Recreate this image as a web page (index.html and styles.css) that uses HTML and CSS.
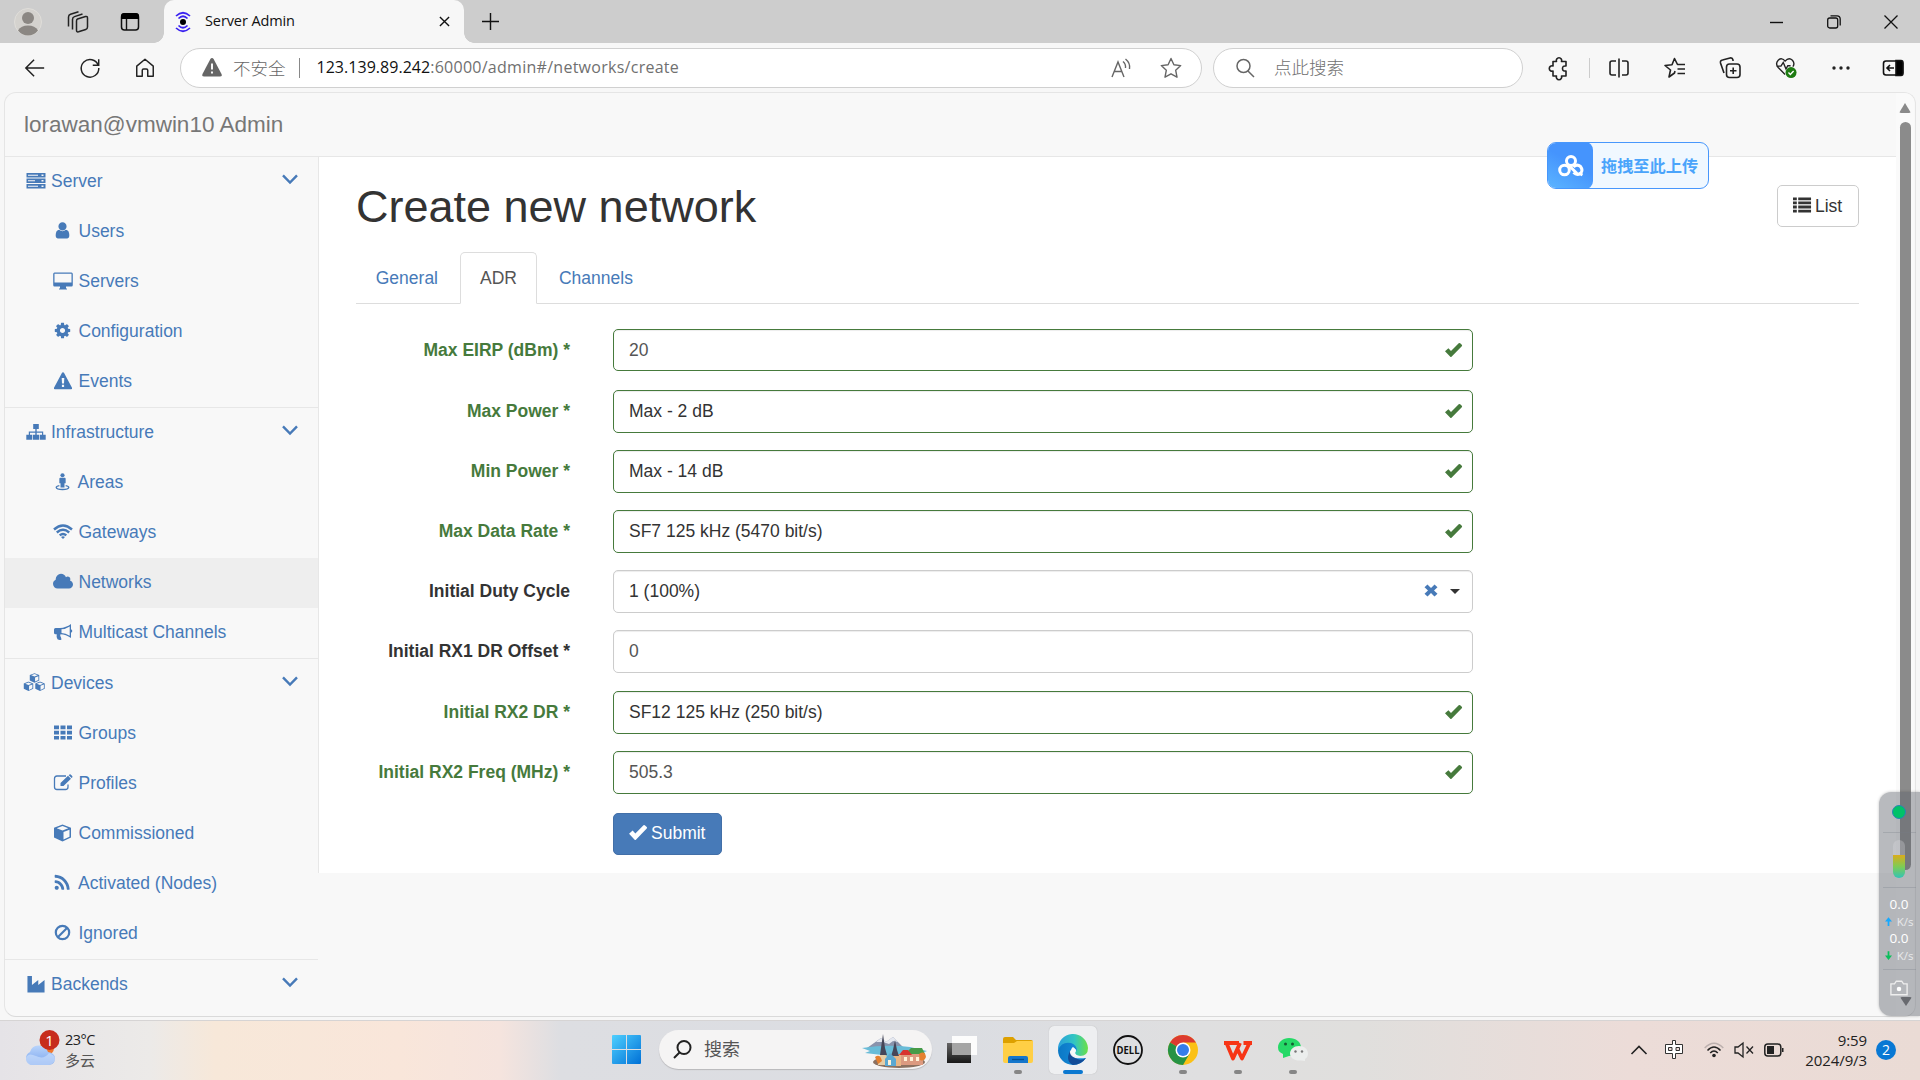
FILE: index.html
```html
<!DOCTYPE html>
<html lang="zh-CN">
<head>
<meta charset="utf-8">
<title>Server Admin</title>
<link rel="stylesheet" href="styles.css">
</head>
<body>
<svg class="defs" width="0" height="0">
  <symbol id="ok" viewBox="0 0 19 16"><path d="M1 9.2 4.4 6.2 7 9 14.7 1.2Q15.4.6 16.2 1.300L17.800 2.700Q18.500 3.500 17.800 4.200L7.500 14.800Q6.900 15.400 6.300 14.800Z"/></symbol>
  <symbol id="down" viewBox="0 0 16 11"><path d="M1 1.300 8 8.500 15 1.300" fill="none" stroke="currentColor" stroke-width="2.400"/></symbol>
  <symbol id="cubep" viewBox="0 0 18 18"><path fill-rule="evenodd" d="M9 .5 17.500 3.800V13.500L9 17.500.5 13.500V3.800ZM9 2 3.200 4.200 9 6.500 14.800 4.200ZM10 8V15.500L16 12.700V5.700Z"/></symbol>
</svg>

<header class="tabstrip">
  <svg class="avatar" viewBox="0 0 28 28"><circle cx="14" cy="14" r="13.500" fill="#d4d2ce" stroke="#e0deda"/><circle cx="14" cy="10" r="6" fill="#8b8783"/><path d="M4 22.500Q7 17.500 14 17.500T24 22.500Q20 27.500 14 27.500T4 22.500Z" fill="#8b8783"/></svg>
  <svg class="workspaces" viewBox="0 0 22 22" fill="none" stroke="#222" stroke-width="1.500" stroke-linejoin="round"><path d="M10.500 8 18.500 5.500Q20.500 5 20.500 7V16Q20.500 18 18.700 18.500L11.500 20.800Q9.500 21.300 9.500 19.300V10Q9.500 8.400 10.500 8ZM5.500 18.500V8.500Q5.500 6.300 7.500 5.600L15.500 3M1.500 15.500V6Q1.500 4 3.500 3.300L11.500.8"/></svg>
  <svg class="tabmenu" viewBox="0 0 20 20"><rect x="1.500" y="2" width="17" height="16" rx="3" fill="none" stroke="#111" stroke-width="1.500"/><path d="M1 7V4Q1 1 4 1H16Q19 1 19 4V7Z"/><path d="M6.500 7V18" stroke="#111" stroke-width="1.400"/></svg>
  <div class="tab">
    <svg class="favicon" viewBox="0 0 18 20" fill="none" stroke="#3a22f0" stroke-width="1.700"><circle cx="9" cy="10" r="3" fill="#000" stroke="none"/><path d="M4.500 6.500Q9 2 13.500 6.500M2 4Q9-2.500 16 4M4.500 13.500Q9 18 13.500 13.500M2 16Q9 22.500 16 16"/></svg>
    <span class="tab-title">Server Admin</span>
    <svg class="tab-close" viewBox="0 0 12 12" stroke="#111" stroke-width="1.500"><path d="M1 1 11 11M11 1 1 11"/></svg>
  </div>
  <svg class="newtab" viewBox="0 0 18 18" stroke="#111" stroke-width="1.500"><path d="M0 9H18M9 0V18"/></svg>
  <div class="winctl">
    <svg viewBox="0 0 14 14" stroke="#111" stroke-width="1.400"><path d="M0 7.500H13"/></svg>
    <svg viewBox="0 0 14 14" fill="none" stroke="#111" stroke-width="1.300"><rect x=".7" y="3" width="10" height="10" rx="2"/><path d="M3.500.8H10Q13.200.8 13.200 4V10.500"/></svg>
    <svg viewBox="0 0 14 14" stroke="#111" stroke-width="1.300"><path d="M.5.500 13.500 13.500M13.500.5.500 13.500"/></svg>
  </div>
</header>

<div class="toolbar">
  <svg class="nav-icon" viewBox="0 0 24 24" fill="none" stroke="#222" stroke-width="1.600"><path d="M22 12H2.500M11 3 2 12 11 21"/></svg>
  <svg class="nav-icon" viewBox="0 0 24 24" fill="none" stroke="#222" stroke-width="1.600"><path d="M21 9A9.600 9.600 0 1 0 21.600 12M21.500 2.500V9H15"/></svg>
  <svg class="nav-icon" viewBox="0 0 24 24" fill="none" stroke="#222" stroke-width="1.600" stroke-linejoin="round"><path d="M3 21V10L12 2.500 21 10V21H15V14.500Q15 13 13.500 13H10.500Q9 13 9 14.500V21Z"/></svg>
  <div class="address">
    <svg class="warn" viewBox="0 0 20 19"><path d="M10 0Q11 0 11.600 1L19.500 16Q20.500 18.500 18 18.500H2Q-.5 18.500.5 16L8.400 1Q9 0 10 0Z" fill="#666"/><path d="M10 5.500V11.500M10 13.500V15.500" stroke="#fff" stroke-width="1.900"/></svg>
    <span class="unsafe">不安全</span>
    <span class="addr-sep"></span>
    <span class="url"><b>123.139.89.242</b><span>:60000/admin#/networks/create</span></span>
    <svg class="read" viewBox="0 0 21 20" fill="none" stroke="#666" stroke-width="1.400"><path d="M1 19 7 4 13 19M3.200 13.500H10.800M12 3.500Q15 6 14.500 10M14.500 1Q19.500 5 18.500 11"/></svg>
    <svg class="star" viewBox="0 0 22 22" fill="none" stroke="#666" stroke-width="1.400" stroke-linejoin="round"><path d="M11 1.500 13.900 7.800 20.700 8.600 15.700 13.300 17 20.200 11 16.800 5 20.200 6.300 13.300 1.300 8.600 8.100 7.800Z"/></svg>
  </div>
  <div class="side-search">
    <svg viewBox="0 0 20 20" fill="none" stroke="#666" stroke-width="1.500"><circle cx="8.500" cy="8" r="6.500"/><path d="M13 13 19 19"/></svg>
    <span>点此搜索</span>
  </div>
  <div class="tools">
    <svg viewBox="0 0 22 22" fill="none" stroke="#222" stroke-width="1.600" stroke-linejoin="round"><path d="M5 4.500H8.500A2.700 2.700 0 1 1 13.500 4.500H18V9Q14.500 8.500 14.500 11.500T18 14V19H13.500A2.700 2.700 0 1 1 8.500 19H5V14A2.700 2.700 0 1 1 5 9Z"/></svg>
    <i class="tool-sep"></i>
    <svg viewBox="0 0 22 22" fill="none" stroke="#222" stroke-width="1.600"><path d="M11 1.500V20.500M8 4H4Q2 4 2 6V16Q2 18 4 18H8M14 4H18Q20 4 20 6V16Q20 18 18 18H14"/></svg>
    <svg viewBox="0 0 22 22" fill="none" stroke="#222" stroke-width="1.600" stroke-linejoin="round"><path d="M11 14 10.500 16 5 20 6.500 13 1 8.500 8 7.700 10.500 1.500 13.500 7.500H21M13.500 12H21M13.500 16.500H21"/></svg>
    <svg viewBox="0 0 22 22" fill="none" stroke="#222" stroke-width="1.600"><rect x="7.500" y="7" width="13.500" height="13.500" rx="3"/><path d="M14.200 10.500V17M11 13.700H17.500M5 16 1.500 6Q1 3.500 3.500 3L11 1Q13.500.5 14 3V4"/></svg>
    <svg viewBox="0 0 24 24" fill="none" stroke="#222" stroke-width="1.500"><path d="M11 19 3.500 11.500Q0 7 3.500 3.500 7.500 0 11 4.500 15 0 19 3.500 22 7 19.500 10.500M1.500 10H6.500L9 6 12 13 14 9.500H17"/><circle cx="17.500" cy="17" r="6" fill="#1e7b12" stroke="none"/><path d="M14.700 17 16.700 19 20.300 15.200" stroke="#fff"/></svg>
    <svg viewBox="0 0 22 22" fill="#222"><circle cx="4" cy="11" r="1.700"/><circle cx="11" cy="11" r="1.700"/><circle cx="18" cy="11" r="1.700"/></svg>
    <svg class="side-toggle" viewBox="0 0 22 22" fill="none" stroke="#111" stroke-width="1.600"><rect x="1.500" y="4" width="19" height="14" rx="2.500"/><path d="M14 3.500H19Q21 3.500 21 6V16Q21 18.500 19 18.500H14Z" fill="#000"/><path d="M12 11H5M8 8 5 11 8 14"/></svg>
  </div>
</div>

<div class="viewport">
  <div class="page">
    <nav class="brandbar">lorawan@vmwin10 Admin</nav>
    <div class="columns">
      <aside class="sidebar">
        <section>
          <a class="group"><svg viewBox="0 0 20 18"><path fill-rule="evenodd" d="M.5 1H19.500V5.500H.5ZM.5 6.500H19.500V11H.5ZM.5 12H19.500V16.500H.5ZM2 2.700V3.800H12V2.700ZM2 8.200V9.300H9V8.200ZM2 13.700V14.800H12V13.700ZM15.500 2.400V4.100H17.500V2.400ZM15.500 7.900V9.600H17.500V7.900ZM15.500 13.400V15.100H17.500V13.400Z"/></svg><span>Server</span><svg class="chev"><use href="#down"/></svg></a>
          <a class="item"><svg class="user" viewBox="128 100 1536 1600"><path d="M1536 1399q0 109-62.500 187t-150.500 78h-854q-88 0-150.500-78t-62.500-187q0-85 8.500-160.500t31.500-152 58.500-131 94-89 134.500-34.500q131 128 313 128t313-128q76 0 134.500 34.500t94 89 58.500 131 31.500 152 8.500 160.500zm-256-887q0 159-112.500 271.500t-271.500 112.500-271.500-112.500-112.500-271.500 112.500-271.500 271.500-112.500 271.500 112.500 112.500 271.500z"/></svg><span>Users</span></a>
          <a class="item"><svg viewBox="0 0 20 18"><path fill-rule="evenodd" d="M1.500.5H18.500Q19.800.5 19.800 2V13Q19.800 14.500 18.500 14.500H13V16.500H14V17.500H6V16.500H7V14.500H1.500Q.2 14.500.2 13V2Q.2.5 1.500.5ZM1.500 1.800V10.500H18.500V1.800Z"/></svg><span>Servers</span></a>
          <a class="item"><svg class="cog" viewBox="50 50 1692 1692"><path d="M1152 896q0-106-75-181t-181-75-181 75-75 181 75 181 181 75 181-75 75-181zm512-109v222q0 12-8 23t-20 13l-185 28q-19 54-39 91 35 50 107 138 10 12 10 25t-9 23q-27 37-99 108t-94 71q-12 0-26-9l-138-108q-44 23-91 38-16 136-29 186-7 28-36 28h-222q-14 0-24.500-8.500t-11.500-21.500l-28-184q-49-16-90-37l-141 107q-10 9-25 9-14 0-25-11-126-114-165-168-7-10-7-23 0-12 8-23 15-21 51-66.500t54-70.500q-27-50-41-99l-183-27q-13-2-21-12.500t-8-23.500v-222q0-12 8-23t19-13l186-28q14-46 39-92-40-57-107-138-10-12-10-24 0-10 9-23 26-36 98.500-107.500t94.500-71.500q13 0 26 10l138 107q44-23 91-38 16-136 29-186 7-28 36-28h222q14 0 24.500 8.500t11.500 21.500l28 184q49 16 90 37l142-107q9-9 24-9 13 0 25 10 129 119 165 170 7 8 7 22 0 12-8 23-15 21-51 66.500t-54 70.500q26 50 41 98l183 28q13 2 21 12.500t8 23.500z"/></svg><span>Configuration</span></a>
          <a class="item"><svg viewBox="0 0 20 18"><path fill-rule="evenodd" d="M10 .3Q10.700.3 11.100 1L19 15.800Q19.500 17.300 18 17.300H2Q.5 17.300 1 15.800L8.900 1Q9.300.3 10 .3ZM8.700 6 9 11.500H11L11.300 6ZM8.900 12.800V15H11.100V12.800Z"/></svg><span>Events</span></a>
        </section>
        <section>
          <a class="group"><svg viewBox="0 0 20 18"><path d="M7.200 1H12.800V6H10.700V8.500H17.200V11.700H19.700V16.700H13.700V11.700H16V9.700H10.700V11.700H13V16.700H7V11.700H9.300V9.700H4V11.700H6.300V16.700H.3V11.700H2.800V8.500H9.300V6H7.200Z"/></svg><span>Infrastructure</span><svg class="chev"><use href="#down"/></svg></a>
          <a class="item areas"><svg viewBox="0 0 19 20"><circle cx="9.500" cy="2.500" r="2.300"/><path d="M7 5.300H12Q13 5.300 13 6.500V11.500H11.700V16H7.300V11.500H6V6.500Q6 5.300 7 5.300Z"/><path d="M6 14Q2.500 14.700 2.500 16 3 18.300 9.500 18.300T16.500 16Q16.500 14.700 13 14" fill="none" stroke="currentColor" stroke-width="1.500"/></svg><span>Areas</span></a>
          <a class="item"><svg viewBox="0 0 20 18" fill="none" stroke="currentColor" stroke-width="2.400"><path d="M1 6.500Q10-1.500 19 6.500M3.800 9.500Q10 4 16.200 9.500M6.700 12.300Q10 9.500 13.300 12.300"/><path d="M10 16 8 14Q10 12.500 12 14Z" fill="currentColor" stroke="none"/></svg><span>Gateways</span></a>
          <a class="item active"><svg viewBox="0 170 1920 1480"><path d="M1920 1152q0 159-112.500 271.500t-271.500 112.500h-1088q-185 0-316.500-131.500t-131.500-316.500q0-132 71-241.500t187-163.500q-2-28-2-43 0-212 150-362t362-150q158 0 286.500 88t187.500 230q70-62 166-62 106 0 181 75t75 181q0 75-41 138 129 30 213 134.500t84 239.500z"/></svg><span>Networks</span></a>
          <a class="item"><svg viewBox="0 0 20 18"><path fill-rule="evenodd" d="M18 1V6.300Q19.300 6.700 19.300 8T18 9.700V15Q13 11.200 7.500 11.200 6.700 12.500 8 14.500L8.500 16.500Q6.500 17.700 4.500 16.200 3.200 13.700 3.700 11.200H2.500Q1 11.200 1 9.700V6.500Q1 5 2.500 5H7Q13 4.700 18 1ZM8.500 6.300V9.900Q12.500 10 16.700 12.800V3.400Q12.500 6.100 8.500 6.300Z"/></svg><span>Multicast Channels</span></a>
        </section>
        <section>
          <a class="group cubes"><svg viewBox="0 0 23 19"><use href="#cubep" x="6" y="0" width="11" height="10"/><use href="#cubep" x="0" y="8.300" width="11" height="10"/><use href="#cubep" x="11.500" y="8.300" width="11" height="10"/></svg><span>Devices</span><svg class="chev"><use href="#down"/></svg></a>
          <a class="item"><svg viewBox="0 0 20 18"><path d="M1 1.500H6V5.200H1ZM7.500 1.500H12.500V5.200H7.500ZM14 1.500H19V5.200H14ZM1 6.700H6V10.400H1ZM7.500 6.700H12.500V10.400H7.500ZM14 6.700H19V10.400H14ZM1 11.900H6V15.600H1ZM7.500 11.900H12.500V15.600H7.500ZM14 11.900H19V15.600H14Z"/></svg><span>Groups</span></a>
          <a class="item"><svg viewBox="0 0 20 18"><path d="M13 2H4Q1.500 2 1.500 4.500V13Q1.500 15.500 4 15.500H12.500Q15 15.500 15 13V10.500" fill="none" stroke="currentColor" stroke-width="1.300"/><path d="M7.500 9 15 1.800 18 4.700 10.500 12H7.500ZM15.700 1.200 16.500.5Q17.300 0 18 .7L19.200 1.900Q19.800 2.700 19.200 3.400L18.600 4.100Z"/></svg><span>Profiles</span></a>
          <a class="item"><svg viewBox="0 0 19 18"><use href="#cubep" width="18" height="18"/></svg><span>Commissioned</span></a>
          <a class="item areas"><svg class="rss" viewBox="128 150 1600 1500"><path d="M576 1344q0 80-56 136t-136 56-136-56-56-136 56-136 136-56 136 56 56 136zm512 123q2 28-17 48-18 21-47 21h-135q-25 0-43-16.500t-20-41.500q-22-229-184.500-391.500t-391.500-184.500q-25-2-41.500-20t-16.500-43v-135q0-29 21-47 17-17 43-17h5q160 13 306 80.500t259 181.500q114 113 181.500 259t80.500 306zm512 2q2 27-18 47-18 20-46 20h-143q-26 0-44.500-17.500t-19.500-42.500q-12-215-101-408.500t-231.500-336-336-231.500-408.500-102q-25-1-42.500-19.500t-17.500-43.500v-143q0-28 20-46 18-18 44-18h3q262 13 501.500 120t425.500 294q187 186 294 425.500t120 501.500z"/></svg><span>Activated (Nodes)</span></a>
          <a class="item"><svg viewBox="0 0 20 18" fill="none" stroke="currentColor" stroke-width="2.200"><circle cx="9.500" cy="8.500" r="6.700"/><path d="M5 13 14 4"/></svg><span>Ignored</span></a>
        </section>
        <section>
          <a class="group"><svg viewBox="0 0 20 20"><path d="M.5 1H5.500V11L12.500 5.500V11L19.500 5.500V19.500H.5Z"/></svg><span>Backends</span><svg class="chev"><use href="#down"/></svg></a>
        </section>
      </aside>
      <main class="content">
        <div class="heading">
          <h1>Create new network</h1>
          <a class="list-btn"><svg viewBox="0 0 20 18"><path d="M0 1H4V4H0ZM5.500 1H19V4H5.500ZM0 5.300H4V8.300H0ZM5.500 5.300H19V8.300H5.500ZM0 9.600H4V12.600H0ZM5.500 9.600H19V12.600H5.500ZM0 13.900H4V16.900H0ZM5.500 13.900H19V16.900H5.500Z"/></svg>List</a>
        </div>
        <ul class="tabs"><li>General</li><li class="current">ADR</li><li>Channels</li></ul>
        <form class="form">
          <div class="row valid first"><label>Max EIRP (dBm) *</label><div class="field typed">20<svg class="ok"><use href="#ok"/></svg></div></div>
          <div class="row valid"><label>Max Power *</label><div class="field">Max - 2 dB<svg class="ok"><use href="#ok"/></svg></div></div>
          <div class="row valid"><label>Min Power *</label><div class="field">Max - 14 dB<svg class="ok"><use href="#ok"/></svg></div></div>
          <div class="row valid"><label>Max Data Rate *</label><div class="field">SF7 125 kHz (5470 bit/s)<svg class="ok"><use href="#ok"/></svg></div></div>
          <div class="row"><label>Initial Duty Cycle</label><div class="field">1 (100%)<svg class="clear" viewBox="0 0 14 13"><path d="M3.500.5 7 4 10.500.5 13.500 3.200 10 6.500 13.500 9.800 10.500 12.500 7 9 3.500 12.500.5 9.800 4 6.500.5 3.200Z"/></svg><i class="caret"></i></div></div>
          <div class="row spaced"><label>Initial RX1 DR Offset *</label><div class="field typed">0</div></div>
          <div class="row valid"><label>Initial RX2 DR *</label><div class="field">SF12 125 kHz (250 bit/s)<svg class="ok"><use href="#ok"/></svg></div></div>
          <div class="row valid last"><label>Initial RX2 Freq (MHz) *</label><div class="field typed">505.3<svg class="ok"><use href="#ok"/></svg></div></div>
          <button type="button" class="submit"><svg><use href="#ok"/></svg>Submit</button>
        </form>
      </main>
    </div>
  </div>
  <div class="scrollbar"><i class="arrow-up"></i><i class="thumb"></i></div>
</div>

<footer class="taskbar">
  <div class="weather">
    <svg viewBox="0 0 38 40"><defs><linearGradient id="cl" x2="0" y2="1"><stop stop-color="#b9d4fb"/><stop offset="1" stop-color="#7ba6ee"/></linearGradient></defs><circle cx="24" cy="19" r="7" fill="#f0762c"/><path d="M8 36A7 7 0 0 1 7 23Q9 16 16 16.500T25 23Q32 24 32 29.500T26 36Z" fill="url(#cl)"/><path d="M3 29Q5 23 13 27T26 24Q32 26 32 30T26 36H8Q3 35 3 29Z" fill="#d6e6fd" opacity=".55"/><circle cx="26.500" cy="11" r="10" fill="#c72c1c"/><text x="26.500" y="16.500" text-anchor="middle" font-size="15" fill="#fff">1</text></svg>
    <div class="weather-text"><span>23°C</span><small>多云</small></div>
  </div>
  <svg class="start" viewBox="0 0 29 29"><defs><linearGradient id="wn" x2="1" y2="1"><stop stop-color="#4fd0ff"/><stop offset="1" stop-color="#0070d6"/></linearGradient></defs><path d="M0 1Q0 0 1 0H14V14H0ZM15 0H28Q29 0 29 1V14H15ZM0 15H14V29H1Q0 29 0 28ZM15 15H29V28Q29 29 28 29H15Z" fill="url(#wn)"/></svg>
  <div class="task-search">
    <svg class="mag" viewBox="0 0 19 19" fill="none" stroke="#222" stroke-width="2"><circle cx="11" cy="7.500" r="6.500"/><path d="M6.500 12.500 1 18"/></svg>
    <span>搜索</span>
    <svg class="town" viewBox="0 0 66 34"><path d="M5 14 19 4 24 8 31 3 42 14Z" fill="#8993ac"/><path d="M14 8 19 4 24 8 31 3 36 8 31 7 27 10 21 8Z" fill="#e5e8f0"/><path d="M0 14Q25 10 48 13L65 17Q55 21 52 23L14 26 20 21 3 19 8 17Z" fill="#69bcd8"/><ellipse cx="37" cy="28" rx="26" ry="6" fill="#8c7160"/><path d="M16 24 21 18 26 24V31H16Z" fill="#e6cda5"/><path d="M27 20H39V32H27Z" fill="#e9b584"/><path d="M39 20H61V31H39Z" fill="#dc9a80"/><path d="M45 18 49 14H60L63 20H45Z" fill="#469b49"/><path d="M37 21 41 16H46L50 21Z" fill="#d8332f"/><path d="M19 14 21 0 23 14 25 21H18ZM31 16 33 6 35 16 37 22H29Z" fill="#454659"/><path d="M23 25 28 19 34 25V32H23Z" fill="#5ba8d1"/><path d="M26 26H29V31H26ZM42 23H45V27H42ZM48 23H51V27H48ZM54 23H57V27H54Z" fill="#fff2d8"/><path d="M57 20Q63 16 64 23Q62 28 58 26ZM13 23Q18 19 20 27L16 30Z" fill="#e58030"/></svg>
  </div>
  <div class="apps">
    <span><svg viewBox="0 0 30 30"><defs><linearGradient id="tv" x2="0" y2="1"><stop stop-color="#666"/><stop offset="1" stop-color="#181818"/></linearGradient></defs><path d="M0 8H24V28H0Z" fill="url(#tv)"/><path d="M5 1H30V20H5Z" fill="#fff" opacity=".9"/><path d="M5 8H24V20H5Z" fill="#a5a5a5"/></svg></span>
    <span class="running"><svg viewBox="0 0 30 30"><path d="M0 4Q0 2 2 2H10L13 5H28Q30 5 30 7V12H0Z" fill="#dda000"/><path d="M0 8H11L14 6H30V26Q30 28 28 28H2Q0 28 0 26Z" fill="#ffcf45"/><path d="M5 28V23Q5 21 7 21H23Q25 21 25 23V28Z" fill="#1677cc"/><path d="M9 24.500H21" stroke="#07508f" stroke-width="1.300"/></svg></span>
    <span class="running current-app"><svg viewBox="0 0 30 30"><defs><linearGradient id="ed1" x2="1"><stop stop-color="#2a9fdc"/><stop offset=".55" stop-color="#32c6c2"/><stop offset="1" stop-color="#6be045"/></linearGradient><linearGradient id="ed2" x2="1"><stop stop-color="#0b78c5"/><stop offset="1" stop-color="#1a91df"/></linearGradient></defs><path d="M0 15A15 15 0 0 1 30 13Q30 21 22 21 17 21 17 18 20 13 15 11 9 7 0 15Z" fill="url(#ed1)"/><path d="M0 15Q4 6 13 8 19 10 19 16 16 11 12 16 10 25 28 23 23 30 15 30A15 15 0 0 1 0 15Z" fill="url(#ed2)"/><path d="M12 16Q7 26 15 30 23 30 28 23 23 26 18 23.500 11 21 12 16Z" fill="#124c98"/><path d="M15 12Q19 14 17 18 18 21 23 21 14 23 13 17 13 13 15 12Z" fill="#f5f9fa"/></svg></span>
    <span><svg viewBox="0 0 30 30"><circle cx="15" cy="15" r="14" fill="none" stroke="#111" stroke-width="1.800"/><text x="15" y="18.700" text-anchor="middle" font-size="10" font-weight="700" fill="#111" textLength="23" lengthAdjust="spacingAndGlyphs">DELL</text></svg></span>
    <span class="running"><svg viewBox="0 0 30 30"><circle cx="15" cy="15" r="15" fill="#fbc116"/><path d="M15 15 2 7.500A15 15 0 0 1 28 7.500H15Z" fill="#dc3b30"/><path d="M2 7.500A15 15 0 0 0 15 30L21.500 18.700 15 15Z" fill="#269344"/><circle cx="15" cy="15" r="7.500" fill="#fff"/><circle cx="15" cy="15" r="6" fill="#347de9"/></svg></span>
    <span class="running"><svg viewBox="0 0 30 30" fill="none" stroke="#f73516" stroke-width="3.800" stroke-linejoin="round"><path d="M1 8H16M3.500 8 10 23.500 17 8M14 13 19 23.500 26.500 8M20.500 8H29"/></svg></span>
    <span class="running"><svg viewBox="0 0 30 30"><path d="M11 3C18 3 23 7 23 12.500S18 21 11 21L5 23 5 19Q0 17 0 12.500C0 7 5 3 11 3Z" fill="#26d967"/><circle cx="7.500" cy="9" r="1.500" fill="#145d32"/><circle cx="14.500" cy="9" r="1.500" fill="#145d32"/><path d="M21 11C26.500 11 30 14.500 30 18.500Q30 22 27 24V26L23 25.500C16 26 12 22.500 12 18.500S16 11 21 11Z" fill="#eceeed"/><circle cx="17.500" cy="16.500" r="1.200" fill="#777"/><circle cx="24" cy="16.500" r="1.200" fill="#777"/></svg></span>
  </div>
  <div class="tray">
    <svg class="tray-up" viewBox="0 0 16 10" fill="none" stroke="#222" stroke-width="1.600"><path d="M.5 9 8 1.500 15.500 9"/></svg>
    <svg class="ime" viewBox="0 0 18 19"><path d="M7.500.5H10.500V4.500H17.500V13.500H10.500V18.500H7.500V13.500H.5V4.500H7.500Z" fill="#fff" stroke="#333"/><path d="M3.500 7.500H7V10.500H3.500ZM11 7.500H14.500V10.500H11Z" fill="#ead9d6" stroke="#333"/></svg>
    <svg class="wifi" viewBox="0 0 20 16" fill="none" stroke="#222" stroke-width="1.500"><path d="M.7 6Q10-3.500 19.300 6" stroke="#bcb0ae"/><path d="M3.500 8.500Q10 1.500 16.500 8.500M6.200 11Q10 7 13.800 11"/><circle cx="10" cy="13.500" r="1.800" fill="#222" stroke="none"/></svg>
    <svg class="vol" viewBox="0 0 20 16" fill="none" stroke="#222" stroke-width="1.300"><path d="M1 5H4L9 1V15L4 11H1ZM12.500 4.500 19 11.500M19 4.500 12.500 11.500"/></svg>
    <svg class="bat" viewBox="0 0 20 14"><rect x=".8" y="1" width="16" height="12" rx="3" fill="none" stroke="#222" stroke-width="1.500"/><path d="M3 3H10V11H3ZM18 5H19.500V9H18Z" fill="#222"/></svg>
    <div class="clock"><span>9:59</span><span>2024/9/3</span></div>
    <span class="notice">2</span>
  </div>
</footer>

<div class="upload-pill">
  <div class="pill-icon"><svg viewBox="0 0 26 22" fill="none" stroke="#fff" stroke-width="3"><circle cx="13" cy="6" r="4.500"/><circle cx="6.500" cy="15" r="4.800"/><path d="M11 10.500 19 18.500M15.500 12Q19 8.500 22.500 11.500 25.500 15.500 22.500 18.300 19 21 15.500 17.500M21.500 18.500 24.500 20"/></svg></div>
  <span>拖拽至此上传</span>
</div>

<aside class="monitor">
  <i class="dot"></i>
  <div class="gauge"></div>
  <div class="rates">
    <b>0.0</b><span><svg viewBox="0 0 8 10"><path d="M4 0 8 5H5V10H3V5H0Z" fill="#17a9ff"/></svg>K/s</span>
    <b>0.0</b><span><svg viewBox="0 0 8 10"><path d="M4 10 8 5H5V0H3V5H0Z" fill="#0abf5b"/></svg>K/s</span>
  </div>
  <svg class="camera" viewBox="0 0 20 17" fill="none" stroke="#eee" stroke-width="1.500"><path d="M1 4H5L7 1H13L15 4H19V16H1Z"/><circle cx="10" cy="9.500" r="2.500" fill="#fff" stroke="none"/></svg>
  <i class="arrow-down"></i>
</aside>
</body>
</html>
```
FILE: styles.css
```css
* { box-sizing: border-box; }
body {
  margin: 0;
  width: 1920px;
  height: 1080px;
  overflow: hidden;
  position: relative;
  display: flex;
  flex-direction: column;
  background: #f7f7f7;
  font: 17.5px/25px "Liberation Sans", "Noto Sans CJK SC", sans-serif;
  color: #333;
}
svg { flex: none; display: block; overflow: visible; }
.defs { position: absolute; }

/* window tab strip */
.tabstrip {
  height: 43px;
  flex: none;
  display: flex;
  align-items: center;
  background: #cdcdcd;
  font-family: "Open Sans", "Noto Sans CJK SC", sans-serif;
}
.avatar { width: 28px; height: 28px; margin-left: 14px; }
.workspaces { width: 22px; height: 22px; margin-left: 25px; }
.tabmenu { width: 20px; height: 20px; margin-left: 31px; }
.tab {
  width: 300px;
  height: 43px;
  margin-left: 24px;
  padding: 0 14px 0 10px;
  display: flex;
  align-items: center;
  background: #f7f7f7;
  border-radius: 10px 10px 0 0;
  position: relative;
}
.tab::before, .tab::after {
  content: "";
  position: absolute;
  bottom: 0;
  width: 10px;
  height: 10px;
}
.tab::before { left: -10px; background: radial-gradient(circle at 0 0, transparent 9.5px, #f7f7f7 10px); }
.tab::after { right: -10px; background: radial-gradient(circle at 100% 0, transparent 9.500px, #f7f7f7 10px); }
.favicon { width: 18px; height: 20px; }
.tab-title { margin: -3px auto 0 13px; font-size: 14.5px; letter-spacing: -0.1px; color: #111; white-space: nowrap; }
.tab-close { width: 11px; height: 11px; }
.newtab { width: 17px; height: 17px; margin-left: 18px; }
.winctl { margin-left: auto; margin-right: 22px; display: flex; gap: 43px; }
.winctl svg { width: 14px; height: 14px; }

/* navigation toolbar */
.toolbar {
  height: 49px;
  flex: none;
  display: flex;
  align-items: center;
  padding-left: 24px;
  font-family: "Open Sans", "Noto Sans CJK SC", sans-serif;
}
.nav-icon { width: 22px; height: 22px; margin-right: 33px; }
.address, .side-search {
  height: 40px;
  display: flex;
  align-items: center;
  background: #fff;
  border: 1px solid #d0d0d0;
  border-radius: 20px;
}
.address { width: 1022px; margin-left: -9px; padding: 0 19px 0 21px; }
.warn { width: 20px; height: 19px; }
.unsafe { margin-left: 11px; font-size: 17.5px; color: #666; font-family: "Noto Sans CJK SC", sans-serif; font-weight: 300; }
.addr-sep { width: 1px; height: 20px; margin: 0 17px 0 13px; background: #888; }
.url { margin-right: auto; font-size: 16px; color: #707070; white-space: nowrap; }
.url b { font-weight: 400; color: #111; letter-spacing: 0.03px; }
.url span { letter-spacing: 0.27px; }
.read { width: 21px; height: 20px; }
.star { width: 22px; height: 22px; margin-left: 28px; }
.side-search { width: 310px; margin-left: 11px; padding-left: 21px; gap: 19px; font-size: 17.5px; color: #707070; }
.side-search span { margin-top: -2px; font-family: "Noto Sans CJK SC", sans-serif; font-weight: 300; }
.side-search svg { width: 20px; height: 20px; }
.tools { margin-left: 25px; display: flex; align-items: center; gap: 33.500px; }
.tools svg { width: 22px; height: 22px; }
.tool-sep { width: 1px; height: 20px; margin: 0 -15px; background: #ccc; }
.tools .side-toggle { margin-left: -4px; }

/* page frame */
.viewport {
  height: 925px;
  flex: none;
  margin: 0 4px 0;
  display: flex;
  background: #f8f8f8;
  border: 1px solid #e5e5e5;
  border-bottom-color: #dadada;
  border-radius: 12px;
  overflow: hidden;
}
.page { width: 1891px; display: flex; flex-direction: column; }
.brandbar {
  height: 64px;
  flex: none;
  padding: 19px 19px;
  border-bottom: 1px solid #e7e7e7;
  font-size: 22.5px;
  color: #777;
}
.scrollbar { width: 18px; background: #fafafa; display: flex; flex-direction: column; align-items: center; padding-top: 10px; }
.arrow-up { border: 6px solid transparent; border-top: 0; border-bottom: 10px solid #8a8a8a; border-radius: 2px; }
.thumb { width: 11px; height: 748px; margin-top: 9px; border-radius: 6px; background: #8b8b8b; }
.columns { display: flex; align-items: flex-start; }

/* side menu */
.sidebar { width: 314px; color: #477ab8; }
.sidebar section { margin-right: 1px; }
.sidebar section + section { border-top: 1px solid #e7e7e7; }
.sidebar section:last-child { height: 55px; }
.group, .item { height: 50px; display: flex; align-items: center; padding-bottom: 3px; }
.group span, .item span { padding-top: 1px; }
.group svg, .item svg { fill: currentColor; width: 20px; height: 18px; }
.item svg[fill="none"] { fill: none; }
.group { padding-left: 21px; }
.group > svg:first-child { margin-right: 5px; }
.cubes { padding-left: 18px; }
.group.cubes > svg:first-child { width: 23px; height: 19px; margin-right: 5px; }
.group .chev { width: 16px; height: 11px; margin: -3px 20px 0 auto; }
.item { padding-left: 48px; }
.item svg { margin-right: 5.500px; }
.item .user, .item .cog { width: 19px; height: 17px; margin-right: 6.500px; }
.areas svg { width: 19px; }
.item .rss { height: 16px; width: 17px; margin: 0 7px 0 1px; }
.item.active { background: #eee; }

/* main panel */
.content {
  flex: 1;
  height: 716px;
  padding: 25px 37px 0 37px;
  background: #fff;
  box-shadow: -1px 0 #e7e7e7;
}
.heading { height: 49px; display: flex; justify-content: space-between; }
h1 { margin: 0; font-size: 45px; line-height: 50px; font-weight: 400; }
.list-btn {
  width: 82px;
  height: 42px;
  margin-top: 3px;
  padding-left: 15px;
  display: flex;
  align-items: center;
  gap: 3px;
  border: 1px solid #ccc;
  border-radius: 5px;
}
.list-btn svg { width: 19px; height: 18px; margin-bottom: 2px; fill: #333; }
.tabs {
  height: 52px;
  margin: 21px 0 25px;
  padding: 0;
  display: flex;
  gap: 2.500px;
  list-style: none;
  border-bottom: 1px solid #ddd;
  color: #477ab8;
}
.tabs li { height: 52px; padding: 13px 18.750px 0; border: 1px solid transparent; border-radius: 5px 5px 0 0; }
.tabs .current { color: #555; background: #fff; border-color: #ddd #ddd #fff; }
.row { display: grid; grid-template-columns: 214px 860px; column-gap: 43px; height: 43px; margin-bottom: 17px; }
.row.first { height: 42px; margin-bottom: 19px; }
.row.spaced { margin-bottom: 18px; }
.row.last { margin-bottom: 19px; }
.row label { padding-top: 9px; text-align: right; font-weight: 700; white-space: nowrap; }
.field {
  display: flex;
  align-items: center;
  padding: 0 18px 1px 15px;
  border: 1px solid #ccc;
  border-radius: 5px;
  box-shadow: inset 0 1px 1px rgba(0, 0, 0, .075);
}
.first .field { padding-bottom: 0; }
.typed { color: #555; }
.valid label, .valid .ok { color: #467a3c; }
.valid .field { border-color: #467a3c; }
.field .ok { width: 19px; height: 16px; margin-left: auto; margin-right: -9px; fill: currentColor; }
.clear { width: 14px; height: 13px; margin-left: auto; margin-bottom: 1px; fill: #477ab8; }
.caret { margin: 1px -6px 0 12px; border: 5px solid transparent; border-top-color: #333; border-bottom: 0; }
.submit {
  width: 109px;
  height: 42px;
  margin: 0 0 0 257px;
  padding: 0 0 2px 14px;
  display: flex;
  align-items: center;
  gap: 4px;
  border: 1px solid #426fa8;
  border-radius: 5px;
  background: #477ab8;
  color: #fff;
  font: 17.5px/25px "Liberation Sans", sans-serif;
}
.submit svg { width: 20px; height: 17px; margin-bottom: 2px; margin-right: -1px; fill: #fff; }

/* desktop task bar */
.taskbar {
  height: 60px;
  margin-top: 3px;
  flex: none;
  display: flex;
  align-items: center;
  padding-bottom: 2px;
  border-top: 1px solid #d6d4d4;
  background: linear-gradient(90deg, #e5e3e7 0, #eceae8 150px, #f7e8d9 215px, #f9e6da 400px, #f5e4de 500px, #dddee2 560px, #dbdde2 950px, #dfdfe0 1200px, #e0dfdd 1360px, #ecdcd8 1630px, #eadbd5 1920px);
  font-family: "Open Sans", "Noto Sans CJK SC", sans-serif;
  color: #222;
}
.weather { width: 612px; padding-left: 23px; display: flex; align-items: center; }
.weather svg { width: 38px; height: 40px; margin-top: -2px; }
.weather-text { margin-left: 4px; display: flex; flex-direction: column; font-size: 14.500px; line-height: 20px; letter-spacing: -.5px; }
.weather-text small { font-size: 15px; letter-spacing: 0; color: #555; }
.start { width: 29px; height: 29px; }
.task-search {
  width: 273px;
  height: 39px;
  margin-left: 18px;
  padding: 0 4px 0 14px;
  display: flex;
  align-items: center;
  border-radius: 20px;
  background: #f5f4f4;
  box-shadow: 0 1px 1px #b8b8bb;
  font-size: 18px;
  color: #555;
}
.mag { width: 19px; height: 19px; }
.task-search span { margin: 0 auto 0 12px; }
.town { width: 66px; height: 34px; margin-top: 3px; }
.apps { margin-left: 7px; display: flex; gap: 7px; }
.apps > span { width: 48px; height: 48px; padding: 9px; border-radius: 5px; position: relative; }
.apps > span:first-child { padding-left: 8px; }
.apps svg { width: 30px; height: 30px; }
.current-app { background: #eeeff1; box-shadow: 0 0 1px #aaa; }
.running::after {
  content: "";
  position: absolute;
  left: 20px;
  bottom: 0;
  width: 8px;
  height: 4px;
  border-radius: 2px;
  background: #868686;
}
.current-app::after { left: 14px; width: 20px; background: #0b78d0; }
.tray { margin-left: auto; display: flex; align-items: center; padding-right: 24px; }
.tray-up { width: 16px; height: 10px; margin-right: 18px; }
.ime { width: 18px; height: 19px; margin-right: 21px; }
.wifi { width: 20px; height: 16px; margin-right: 10px; }
.vol { width: 20px; height: 16px; margin-right: 10px; }
.bat { width: 20px; height: 14px; }
.clock { width: 83px; display: flex; flex-direction: column; align-items: flex-end; font-size: 15px; line-height: 20px; letter-spacing: -.1px; }
.notice { width: 20px; height: 20px; margin-left: 9px; border-radius: 50%; background: #0878d4; color: #fff; font-size: 14px; line-height: 20px; text-align: center; }

/* floating upload target */
.upload-pill {
  position: absolute;
  left: 1547px;
  top: 142px;
  width: 162px;
  height: 47px;
  display: flex;
  align-items: center;
  gap: 8px;
  overflow: hidden;
  border: 1px solid #4797fc;
  border-radius: 9px;
  background: #f0f8ff;
  color: #4aa4fb;
  font: 700 16.200px/22px "Noto Sans CJK SC", sans-serif;
  white-space: nowrap;
}
.upload-pill span { margin-top: -2px; }
.pill-icon { width: 45px; height: 47px; display: grid; place-items: center; border-radius: 0 8px 8px 0; background: linear-gradient(30deg, #5cb5ff, #4594fd 55%); }
.pill-icon svg { width: 26px; height: 22px; }

/* floating network monitor */
.monitor {
  position: absolute;
  left: 1879px;
  top: 792px;
  width: 41px;
  height: 224px;
  padding-right: 1px;
  display: flex;
  flex-direction: column;
  align-items: center;
  border-radius: 12px 0 0 12px;
  background: rgba(91, 95, 104, .43);
  box-shadow: 0 0 3px rgba(0, 0, 0, .25);
  font-family: "Open Sans", sans-serif;
  color: #fff;
}
.dot { width: 14px; height: 14px; margin-top: 13px; border: 1px solid #2d83b5; border-radius: 50%; background: #00c268; }
.gauge { width: 33px; height: 56px; margin-top: 13px; border: solid rgba(120, 125, 135, .3); border-width: 1px 0; display: flex; justify-content: center; }
.gauge::before { content: ""; width: 12px; height: 38px; margin-top: 7px; border-radius: 6px; background: linear-gradient(rgba(220, 220, 225, .3) 40%, #d9ad1c 40%, #7ecc55 70%, #32c4b6); }
.rates { width: 33px; height: 82px; padding-top: 6px; display: flex; flex-direction: column; align-items: center; border-bottom: 1px solid rgba(120, 125, 135, .3); }
.rates b { font-size: 13.500px; font-weight: 400; line-height: 21px; }
.rates span { height: 13px; display: flex; align-items: center; gap: 5px; font-size: 11.500px; color: #e8e9eb; }
.rates svg { width: 7px; height: 9px; }
.camera { width: 18px; height: 16px; margin-top: 10px; }
.arrow-down { margin: 1px 0 0 13px; border: 6px solid transparent; border-top: 9px solid #686a6f; border-bottom: 0; border-radius: 2px; }
```
